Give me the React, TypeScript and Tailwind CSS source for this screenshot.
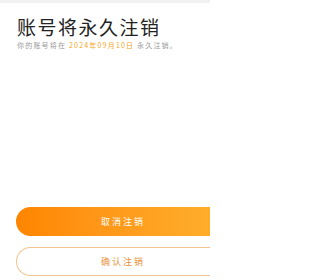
export default function App() {
  return (
    <div className="h-[280px] w-[210px] overflow-hidden bg-white font-['Noto_Sans_CJK_SC',sans-serif]">
      <div className="h-[3px] bg-[#f1f1f1]" />
      <div className="px-[17px] pt-[12px]">
        <h1 className="text-[19px] leading-[24px] tracking-[1.5px] text-[#222]">账号将永久注销</h1>
        <p className="mt-[1px] whitespace-nowrap text-[7px] leading-[10px] tracking-[1.2px] text-[#9a9a9a]">
          你的账号将在 <span className="text-[#f5a623]">2024年09月10日</span> 永久注销。
        </p>
      </div>
      {/* buttons run off the right edge in the reference */}
      <div className="mt-[157px] flex flex-col gap-[11px] pl-[16px]">
        <button className="flex h-[29px] w-[194px] items-center rounded-l-full bg-gradient-to-r from-[#ff8500] to-[#ffad2a] pl-[85px] text-[9px] tracking-[2px] text-white">
          取消注销
        </button>
        <button className="flex h-[29px] w-[194px] items-center rounded-l-full border border-r-0 border-[#f2c48f] bg-white pl-[84px] text-[9px] tracking-[2px] text-[#e8913a]">
          确认注销
        </button>
      </div>
    </div>
  );
}
